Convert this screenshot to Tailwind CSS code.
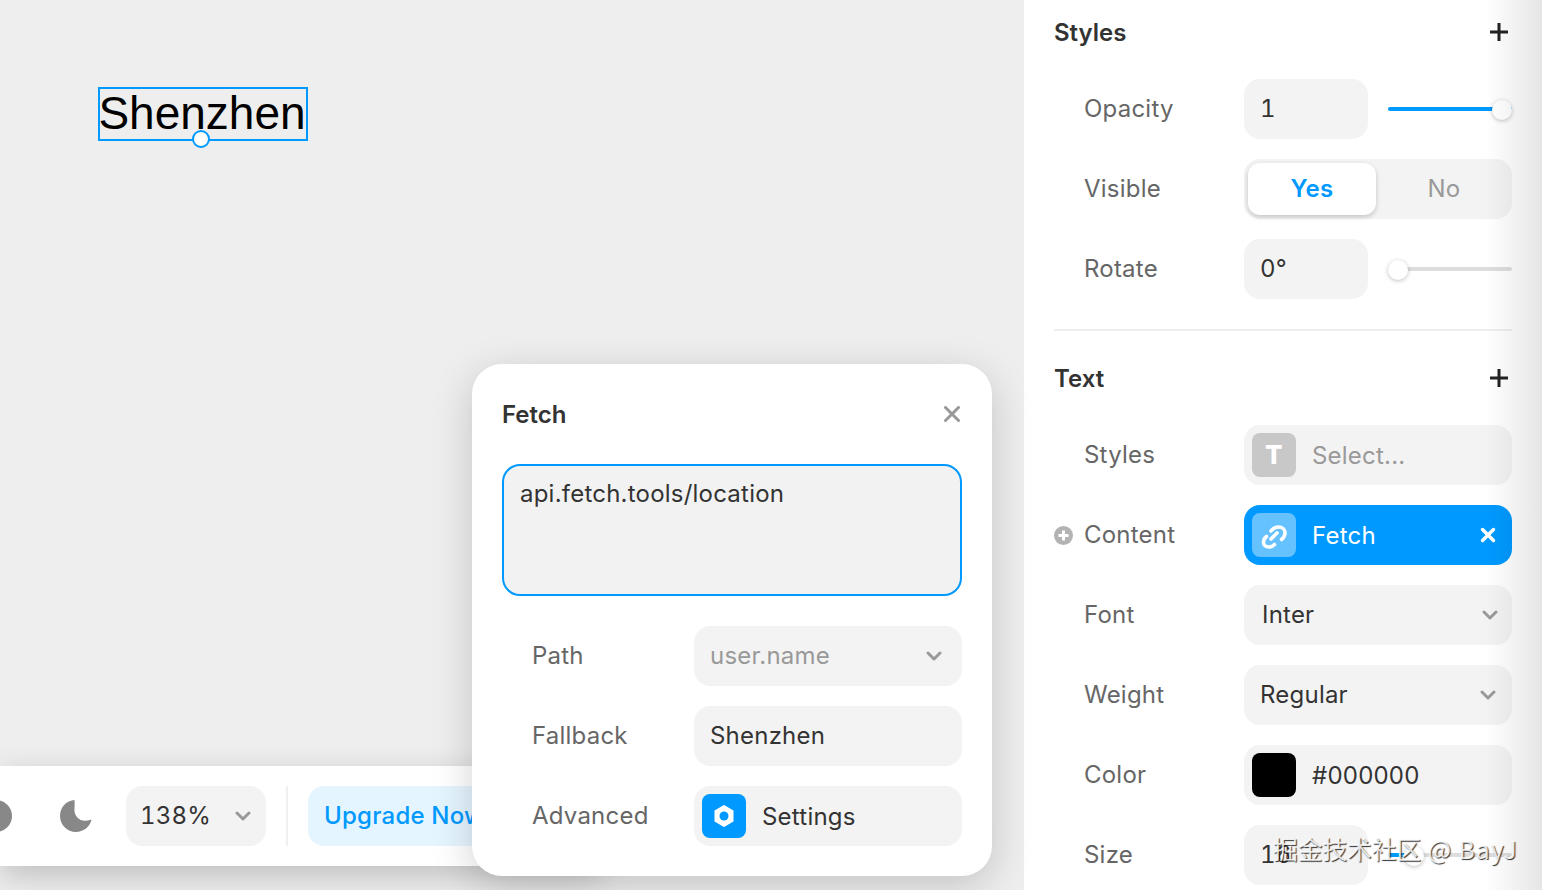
<!DOCTYPE html>
<html lang="en">
  <head>
    <meta charset="utf-8" />
    <title>Fetch override</title>
    <script src="https://cdn.jsdelivr.net/npm/@tailwindcss/browser@4"></script>
  </head>
  <body class="antialiased bg-white font-['Inter',sans-serif] text-[24px] leading-[42px] tracking-[0.22px]">
    <div class="relative flex h-[890px] w-[1542px] overflow-hidden">

      <!-- Canvas -->
      <main class="relative w-[1024px] shrink-0 bg-[#eeeeee]">
        <div class="absolute left-[98px] top-[87px] flex h-[54px] w-[210px] items-center justify-center border-2 border-[#0099ff] pb-[2px] pr-[2px] font-['Liberation_Sans',sans-serif] text-[46px] tracking-normal text-black">
          Shenzhen
          <span class="absolute -bottom-[9px] left-[92px] size-[18px] rounded-full border-2 border-[#0099ff] bg-white"></span>
        </div>

        <!-- Bottom toolbar -->
        <div class="absolute left-0 top-[766px] flex h-[100px] w-[600px] items-center bg-white shadow-[0_10px_30px_rgba(0,0,0,0.2)]">
          <span class="-ml-[20px] size-[32px] rounded-full bg-[#888888]"></span>
          <svg class="ml-[46px] size-[36px]" viewBox="0 0 36 36"><path fill="#888888" d="M16 2C7.6 3 2 9.700 2 18c0 8.800 7.200 16 16 16 7.300 0 13.500-4.900 15.400-11.700.1-.6-.4-.9-.9-.6-1.700.8-3.500 1.100-5.400 1.100-6.400 0-10.700-5-10.700-11 0-2.800.6-5.700 0-9.800z"/></svg>
          <div class="ml-[32px] flex h-[60px] w-[140px] items-center justify-between rounded-[16px] bg-[#f3f3f3] pl-[14px] pr-[15px] tabular-nums text-[#333333]">
            138%
            <svg class="size-[16px]" viewBox="0 0 16 16" fill="none" stroke="#999999" stroke-width="3" stroke-linecap="round" stroke-linejoin="round"><path d="M2 5l6 6 6-6"/></svg>
          </div>
          <span class="ml-[20px] h-[60px] w-[2px] bg-[#f0f0f0]"></span>
          <div class="ml-[20px] flex h-[60px] flex-1 items-center rounded-[16px] bg-[#e5f5ff] pl-[16px] font-medium text-[#0099ff]">Upgrade Now</div>
        </div>

        <!-- Fetch popover -->
        <section class="absolute left-[472px] top-[364px] flex h-[512px] w-[520px] flex-col rounded-[30px] bg-white px-[30px] pt-[30px] shadow-[0_10px_40px_rgba(0,0,0,0.18)]">
          <header class="flex h-[40px] items-center justify-between">
            <h2 class="pt-[2px] font-semibold tracking-normal text-[#333333]">Fetch</h2>
            <svg class="mr-[2px] size-[16px]" viewBox="0 0 16 16" fill="none" stroke="#999999" stroke-width="3" stroke-linecap="round"><path d="M1.500 1.500l13 13M14.500 1.500l-13 13"/></svg>
          </header>
          <div class="mt-[30px] h-[132px] rounded-[18px] border-2 border-[#0099ff] bg-[#f2f2f2] px-[16px] py-[7px] text-[#333333]">api.fetch.tools/location</div>
          <div class="mt-[30px] flex flex-col gap-[20px]">
            <div class="flex h-[60px] items-center pl-[30px]">
              <span class="w-[162px] text-[#666666]">Path</span>
              <div class="flex h-[60px] w-[268px] items-center justify-between rounded-[16px] bg-[#f3f3f3] pl-[16px] pr-[20px] text-[#999999]">
                user.name
                <svg class="size-[16px]" viewBox="0 0 16 16" fill="none" stroke="#999999" stroke-width="3" stroke-linecap="round" stroke-linejoin="round"><path d="M2 5l6 6 6-6"/></svg>
              </div>
            </div>
            <div class="flex h-[60px] items-center pl-[30px]">
              <span class="w-[162px] text-[#666666]">Fallback</span>
              <div class="flex h-[60px] w-[268px] items-center rounded-[16px] bg-[#f3f3f3] pl-[16px] text-[#333333]">Shenzhen</div>
            </div>
            <div class="flex h-[60px] items-center pl-[30px]">
              <span class="w-[162px] text-[#666666]">Advanced</span>
              <div class="flex h-[60px] w-[268px] items-center rounded-[16px] bg-[#f3f3f3] pl-[8px] text-[#333333]">
                <span class="flex size-[44px] items-center justify-center rounded-[8px] bg-[#0099ff]">
                  <svg class="size-[26px]" viewBox="0 0 26 26"><path fill="#ffffff" stroke="#ffffff" stroke-width="2" stroke-linejoin="round" d="M13 3l8.500 5v10L13 23l-8.500-5V8z"/><circle cx="13" cy="13" r="4.500" fill="#0099ff"/></svg>
                </span>
                <span class="ml-[16px] pt-[2px]">Settings</span>
              </div>
            </div>
          </div>
        </section>
      </main>

      <!-- Properties panel -->
      <aside class="w-[518px] shrink-0 bg-white pl-[30px] pr-[30px] pt-[12px]">
        <div class="flex h-[40px] items-center justify-between">
          <h2 class="pt-[2px] font-semibold tracking-normal text-[#333333]">Styles</h2>
          <svg class="mr-[3px] size-[20px]" viewBox="0 0 20 20" fill="none" stroke="#222222" stroke-width="3"><path d="M10 1v18M1 10h18"/></svg>
        </div>

        <div class="mt-[27px] flex flex-col gap-[20px]">
          <div class="flex h-[60px] items-center pl-[30px]">
            <span class="w-[160px] text-[#666666]">Opacity</span>
            <div class="flex h-[60px] w-[124px] items-center rounded-[16px] bg-[#f3f3f3] pl-[16px] tabular-nums text-[#333333]">1</div>
            <div class="relative ml-[20px] flex h-[60px] w-[124px] items-center">
              <span class="h-[4px] w-full rounded-full bg-[#0099ff]"></span>
              <span class="absolute right-0 top-[21px] size-[20px] rounded-full bg-white shadow-[0_1px_4px_rgba(0,0,0,0.25)]"></span>
            </div>
          </div>
          <div class="flex h-[60px] items-center pl-[30px]">
            <span class="w-[160px] text-[#666666]">Visible</span>
            <div class="flex h-[60px] w-[268px] items-center rounded-[16px] bg-[#f3f3f3] p-[4px]">
              <span class="flex h-[52px] w-[128px] items-center justify-center rounded-[12px] bg-white font-semibold text-[#0099ff] shadow-[0_2px_5px_rgba(0,0,0,0.2)]">Yes</span>
              <span class="flex-1 pl-[4px] text-center text-[#999999]">No</span>
            </div>
          </div>
          <div class="flex h-[60px] items-center pl-[30px]">
            <span class="w-[160px] text-[#666666]">Rotate</span>
            <div class="flex h-[60px] w-[124px] items-center rounded-[16px] bg-[#f3f3f3] pl-[16px] tabular-nums text-[#333333]">0°</div>
            <div class="relative ml-[20px] flex h-[60px] w-[124px] items-center">
              <span class="h-[4px] w-full rounded-full bg-[#dddddd]"></span>
              <span class="absolute left-0 top-[21px] size-[20px] rounded-full bg-white shadow-[0_1px_4px_rgba(0,0,0,0.25)]"></span>
            </div>
          </div>
        </div>

        <hr class="mt-[30px] h-[2px] border-0 bg-[#eeeeee]" />

        <div class="mt-[27px] flex h-[40px] items-center justify-between">
          <h2 class="pt-[2px] font-semibold tracking-normal text-[#333333]">Text</h2>
          <svg class="mr-[3px] size-[20px]" viewBox="0 0 20 20" fill="none" stroke="#222222" stroke-width="3"><path d="M10 1v18M1 10h18"/></svg>
        </div>

        <div class="mt-[27px] flex flex-col gap-[20px]">
          <div class="flex h-[60px] items-center pl-[30px]">
            <span class="w-[160px] text-[#666666]">Styles</span>
            <div class="flex h-[60px] w-[268px] items-center rounded-[16px] bg-[#f3f3f3] pl-[8px] text-[#999999]">
              <span class="flex size-[44px] items-center justify-center rounded-[8px] bg-[#c8c8c8] text-[26px] font-extrabold text-white">T</span>
              <span class="ml-[16px] pt-[2px]">Select...</span>
            </div>
          </div>
          <div class="relative flex h-[60px] items-center pl-[30px]">
            <svg class="absolute left-0 top-[21px] size-[19px]" viewBox="0 0 19 19"><circle cx="9.500" cy="9.500" r="9.500" fill="#b3b3b3"/><path d="M9.500 4.500v10M4.500 9.500h10" stroke="#ffffff" stroke-width="3"/></svg>
            <span class="w-[160px] text-[#666666]">Content</span>
            <div class="flex h-[60px] w-[268px] items-center rounded-[16px] bg-[#0099ff] pl-[8px] pr-[16px] text-white">
              <span class="flex size-[44px] items-center justify-center rounded-[8px] bg-[#66c2ff]">
                <svg class="size-[40px]" viewBox="0 0 40 40" fill="none" stroke="#ffffff" stroke-width="3.600" stroke-linecap="round"><path d="M17 16C19 13.500 21.500 12 24.500 12C28.500 12 31 14.500 31 18C31 20.500 30 22.500 27.500 24.500"/><path d="M12.500 21.500C10.500 23 9.500 25 9.500 27.500C9.500 30.500 12 32 15 32C17 32 19 31 20.500 29.500"/><path d="M17 24L23 18"/></svg>
              </span>
              <span class="ml-[16px] flex-1 pt-[2px]">Fetch</span>
              <svg class="size-[16px]" viewBox="0 0 16 16" fill="none" stroke="#ffffff" stroke-width="3.500" stroke-linecap="round"><path d="M2.500 2.500l11 11M13.500 2.500l-11 11"/></svg>
            </div>
          </div>
          <div class="flex h-[60px] items-center pl-[30px]">
            <span class="w-[160px] text-[#666666]">Font</span>
            <div class="flex h-[60px] w-[268px] items-center justify-between rounded-[16px] bg-[#f3f3f3] pl-[18px] pr-[14px] text-[#333333]">
              Inter
              <svg class="size-[16px]" viewBox="0 0 16 16" fill="none" stroke="#999999" stroke-width="3" stroke-linecap="round" stroke-linejoin="round"><path d="M2 5l6 6 6-6"/></svg>
            </div>
          </div>
          <div class="flex h-[60px] items-center pl-[30px]">
            <span class="w-[160px] text-[#666666]">Weight</span>
            <div class="flex h-[60px] w-[268px] items-center justify-between rounded-[16px] bg-[#f3f3f3] pl-[16px] pr-[16px] text-[#333333]">
              Regular
              <svg class="size-[16px]" viewBox="0 0 16 16" fill="none" stroke="#999999" stroke-width="3" stroke-linecap="round" stroke-linejoin="round"><path d="M2 5l6 6 6-6"/></svg>
            </div>
          </div>
          <div class="flex h-[60px] items-center pl-[30px]">
            <span class="w-[160px] text-[#666666]">Color</span>
            <div class="flex h-[60px] w-[268px] items-center rounded-[16px] bg-[#f3f3f3] pl-[8px] text-[#333333]">
              <span class="size-[44px] rounded-[8px] bg-black"></span>
              <span class="ml-[16px] pt-[2px]">#000000</span>
            </div>
          </div>
          <div class="flex h-[60px] items-center pl-[30px]">
            <span class="w-[160px] text-[#666666]">Size</span>
            <div class="flex h-[60px] w-[124px] items-center rounded-[16px] bg-[#f3f3f3] pl-[16px] tabular-nums text-[#333333]">16</div>
            <div class="relative ml-[20px] flex h-[60px] w-[124px] items-center">
              <span class="h-[4px] w-full rounded-full bg-[#dddddd]"></span>
              <span class="absolute left-0 h-[4px] w-[16px] bg-[#0099ff]"></span>
              <span class="absolute left-[16px] top-[21px] size-[20px] rounded-full bg-white shadow-[0_1px_4px_rgba(0,0,0,0.25)]"></span>
            </div>
          </div>
        </div>
      </aside>

      <!-- Right edge shade -->
      <div class="pointer-events-none absolute right-0 top-0 h-full w-[56px] bg-linear-to-r from-transparent to-black/10"></div>

      <!-- Watermark -->
      <div class="pointer-events-none absolute left-[1273px] top-[827px] whitespace-nowrap font-['Noto_Sans_CJK_SC',sans-serif] text-[24.700px] tracking-normal text-white/85 [text-shadow:1px_1px_1px_rgba(0,0,0,0.8)]">掘金技术社区<span class="tracking-[1px]"> @ BayJ</span></div>
    </div>
  </body>
</html>
